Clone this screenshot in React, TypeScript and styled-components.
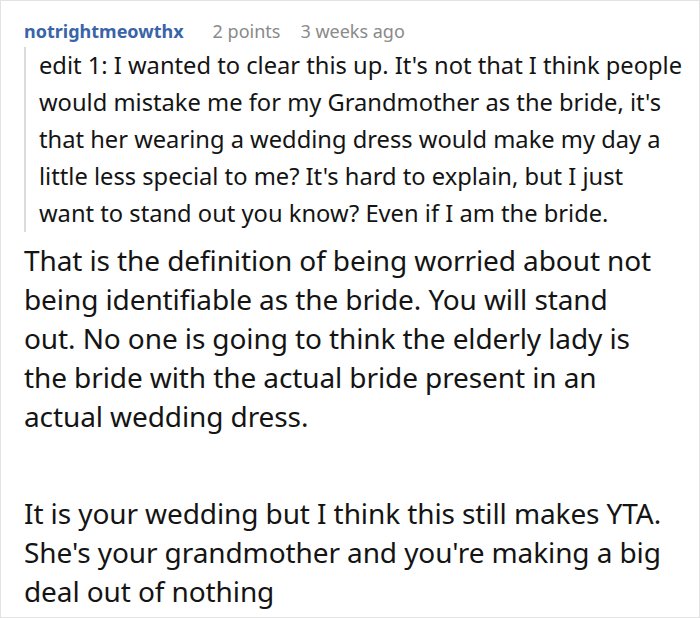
import styled, { createGlobalStyle } from 'styled-components'

const GlobalStyle = createGlobalStyle`
	html, body {
		margin: 0;
		padding: 0;
		background: #ffffff;
	}
	body {
		font-family: 'Noto Sans', 'Open Sans', sans-serif;
		color: #111111;
	}
`

const Frame = styled.div`
	width: 700px;
	height: 618px;
	box-sizing: border-box;
	border: 1px solid #e3e3e3;
	padding: 16px 0 0 23px;
	overflow: hidden;
`

const Meta = styled.div`
	display: flex;
	align-items: baseline;
	gap: 20px;
	font-size: 18px;
	line-height: 28px;
`

const Author = styled.span`
	font-weight: 700;
	color: #3a64a8;
	margin-right: 9px;
`

const Faint = styled.span`
	color: #8a8a8a;
`

const Quote = styled.blockquote`
	margin: 2px 0 0 0;
	padding: 0 0 0 13px;
	border-left: 2px solid #dcdcdc;
	font-size: 23.7px;
	line-height: 37px;
	white-space: nowrap;
	color: #141414;
`

const Body = styled.p<{ $first?: boolean }>`
	margin: ${(p) => (p.$first ? '9px' : '58px')} 0 0 0;
	font-size: 28px;
	line-height: 39px;
	letter-spacing: -0.1px;
	white-space: nowrap;
	color: #141414;
`

export default function App() {
	return (
		<>
			<GlobalStyle />
			<Frame>
				<Meta>
					<Author>notrightmeowthx</Author>
					<Faint>2 points</Faint>
					<Faint>3 weeks ago</Faint>
				</Meta>
				<Quote>
					edit 1: I wanted to clear this up. It's not that I think people
					<br />
					would mistake me for my Grandmother as the bride, it's
					<br />
					that her wearing a wedding dress would make my day a
					<br />
					little less special to me? It's hard to explain, but I just
					<br />
					want to stand out you know? Even if I am the bride.
				</Quote>
				<Body $first>
					That is the definition of being worried about not
					<br />
					being identifiable as the bride. You will stand
					<br />
					out. No one is going to think the elderly lady is
					<br />
					the bride with the actual bride present in an
					<br />
					actual wedding dress.
				</Body>
				<Body>
					It is your wedding but I think this still makes YTA.
					<br />
					She's your grandmother and you're making a big
					<br />
					deal out of nothing
				</Body>
			</Frame>
		</>
	)
}
